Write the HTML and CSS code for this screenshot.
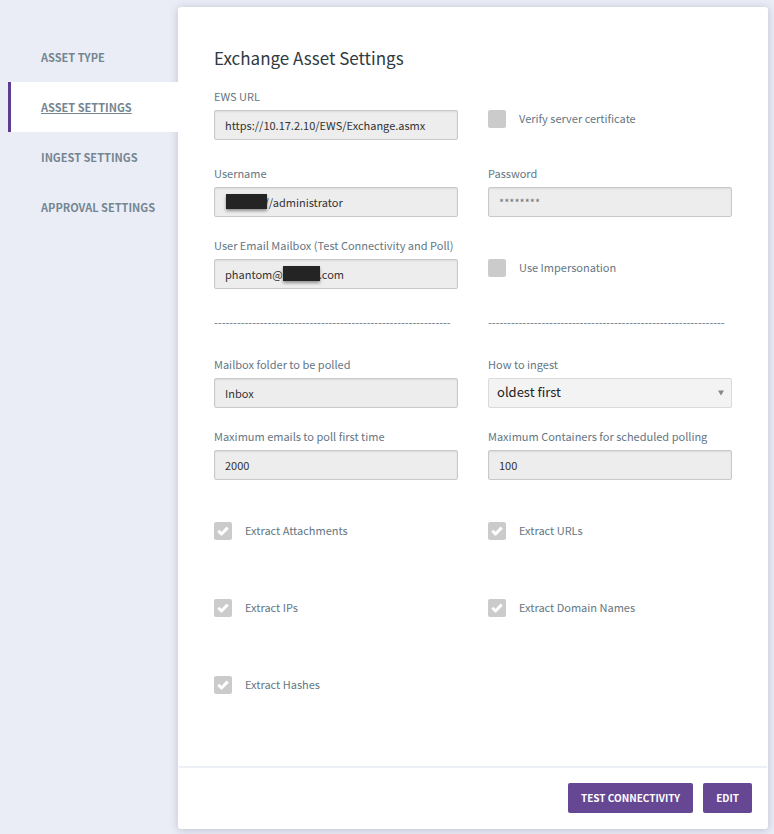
FILE: index.html
```html
<!DOCTYPE html>
<html lang="en">
<head>
<meta charset="utf-8">
<meta name="viewport" content="width=device-width, initial-scale=1">
<title>Exchange Asset Settings</title>
<link rel="stylesheet" href="styles.css">
</head>
<body>
<div class="layout">
  <nav class="tabs">
    <a class="tab" href="#type">ASSET TYPE</a>
    <a class="tab tab-active" href="#settings">ASSET SETTINGS</a>
    <a class="tab" href="#ingest">INGEST SETTINGS</a>
    <a class="tab" href="#approval">APPROVAL SETTINGS</a>
  </nav>
  <main class="card">
    <form class="body">
      <h1 class="title">Exchange Asset Settings</h1>
      <div class="grid">
        <div class="field"><label for="url">EWS URL</label><input class="box" id="url" type="text" value="https://10.17.2.10/EWS/Exchange.asmx" readonly></div>
        <div class="check"><span class="tick"><input id="verify" type="checkbox"></span><label for="verify">Verify server certificate</label></div>

        <div class="field"><label for="user">Username</label><div class="masked"><input class="box" id="user" type="text" value="                //administrator" readonly><span class="redact redact-user"></span></div></div>
        <div class="field"><label for="pass">Password</label><input class="box" id="pass" type="password" placeholder="********" readonly></div>

        <div class="field"><label for="mail">User Email Mailbox (Test Connectivity and Poll)</label><div class="masked"><input class="box" id="mail" type="text" value="phantom@c           r.com" readonly><span class="redact redact-mail"></span></div></div>
        <div class="check"><span class="tick"><input id="imp" type="checkbox"></span><label for="imp">Use Impersonation</label></div>

        <div class="rule">--------------------------------------------------------------</div>
        <div class="rule">--------------------------------------------------------------</div>

        <div class="field"><label for="folder">Mailbox folder to be polled</label><input class="box" id="folder" type="text" value="Inbox" readonly></div>
        <div class="field"><label for="how">How to ingest</label><div class="masked"><select class="box select" id="how"><option>oldest first</option></select><svg class="arrow" viewBox="0 0 6 6" aria-hidden="true"><path d="M0 0.500H6L3 5.500Z"/></svg></div></div>

        <div class="field"><label for="first">Maximum emails to poll first time</label><input class="box" id="first" type="text" value="2000" readonly></div>
        <div class="field"><label for="max">Maximum Containers for scheduled polling</label><input class="box" id="max" type="text" value="100" readonly></div>

        <div class="check"><span class="tick"><input id="att" type="checkbox" checked><svg viewBox="0 0 18 18" aria-hidden="true"><path d="M4.300 8.800 7.500 12 13.700 5.600"/></svg></span><label for="att">Extract Attachments</label></div>
        <div class="check"><span class="tick"><input id="urls" type="checkbox" checked><svg viewBox="0 0 18 18" aria-hidden="true"><path d="M4.300 8.800 7.500 12 13.700 5.600"/></svg></span><label for="urls">Extract URLs</label></div>

        <div class="check"><span class="tick"><input id="ips" type="checkbox" checked><svg viewBox="0 0 18 18" aria-hidden="true"><path d="M4.300 8.800 7.500 12 13.700 5.600"/></svg></span><label for="ips">Extract IPs</label></div>
        <div class="check"><span class="tick"><input id="dom" type="checkbox" checked><svg viewBox="0 0 18 18" aria-hidden="true"><path d="M4.300 8.800 7.500 12 13.700 5.600"/></svg></span><label for="dom">Extract Domain Names</label></div>

        <div class="check"><span class="tick"><input id="hash" type="checkbox" checked><svg viewBox="0 0 18 18" aria-hidden="true"><path d="M4.300 8.800 7.500 12 13.700 5.600"/></svg></span><label for="hash">Extract Hashes</label></div>
      </div>
    </form>
    <footer class="footer">
      <button class="btn" type="button">TEST CONNECTIVITY</button>
      <button class="btn" type="button">EDIT</button>
    </footer>
  </main>
</div>
</body>
</html>
```
FILE: styles.css
```css
* {
  box-sizing: border-box;
}

body {
  margin: 0;
  background: #eaedf6;
  color: #647683;
  font: 400 11px/18px "Noto Sans CJK SC", "Noto Sans", sans-serif;
}

.layout {
  display: flex;
  padding: 7px 6px 5px 8px;
}

.tabs {
  flex: 0 0 170px;
  padding-top: 25px;
  position: relative;
  z-index: 1;
}

.tab {
  display: block;
  padding: 16px 0 16px 30px;
  border-left: 3px solid transparent;
  color: #748692;
  font-weight: 700;
  text-decoration: none;
}

.tab-active {
  background: #fff;
  border-left-color: #5c3d90;
  text-decoration: underline;
}

.card {
  flex: 1;
  min-width: 0;
  background: #fff;
  border-radius: 3px;
  box-shadow: 0 1px 8px rgba(60, 55, 100, 0.25);
}

.body {
  padding: 36px;
}

.title {
  margin: 0 0 14px;
  color: #2f3a42;
  font-size: 17px;
  font-weight: 400;
  line-height: 30px;
}

.grid {
  display: grid;
  grid-template-columns: 1fr 1fr;
  column-gap: 30px;
}

.field {
  display: flex;
  flex-direction: column;
  gap: 5px;
  padding-bottom: 19px;
}

.masked {
  display: flex;
  position: relative;
}

.box {
  width: 100%;
  height: 30px;
  padding: 0 10px;
  background: #ededed;
  border: 1px solid #c9c9c9;
  border-radius: 2px;
  box-shadow: inset 0 1px 2px rgba(0, 0, 0, 0.08);
  color: #333;
  font: inherit;
}

.box::placeholder {
  color: #757575;
}

.select {
  padding: 0 8px 2px;
  appearance: none;
  background: #f3f3f3;
  border-color: #dadada;
  box-shadow: none;
  color: #222;
  font-size: 13px;
}

.arrow {
  position: absolute;
  top: 12px;
  right: 8px;
  width: 6px;
  height: 6px;
  fill: #888;
}

.redact {
  position: absolute;
  top: 7px;
  height: 15px;
  background: #242424;
  box-shadow: 0 2px 3px rgba(0, 0, 0, 0.4);
}

.redact-user {
  left: 12px;
  width: 41px;
}

.redact-mail {
  left: 69px;
  width: 37px;
}

.check {
  display: flex;
  align-items: flex-start;
  gap: 13px;
  height: 77px;
  padding-top: 23px;
  line-height: 16px;
}

.tick {
  display: grid;
  width: 18px;
  height: 18px;
}

.tick input,
.tick svg {
  grid-area: 1 / 1;
  width: 18px;
  height: 18px;
  margin: 0;
}

.tick input {
  appearance: none;
  background: #cbcbcb;
  border-radius: 2px;
}

.tick svg {
  fill: none;
  stroke: #fff;
  stroke-width: 3;
  stroke-linejoin: round;
  pointer-events: none;
}

.rule {
  height: 42px;
  white-space: nowrap;
}

.footer {
  display: flex;
  justify-content: flex-end;
  gap: 10px;
  margin: 0 1px;
  padding: 15px 15px 16px;
  border-top: 2px solid #edf1f6;
}

.btn {
  height: 30px;
  padding: 0 13px;
  background: #664793;
  border: 0;
  border-radius: 2px;
  color: #fff;
  font: inherit;
  font-size: 10px;
  font-weight: 700;
}
```
